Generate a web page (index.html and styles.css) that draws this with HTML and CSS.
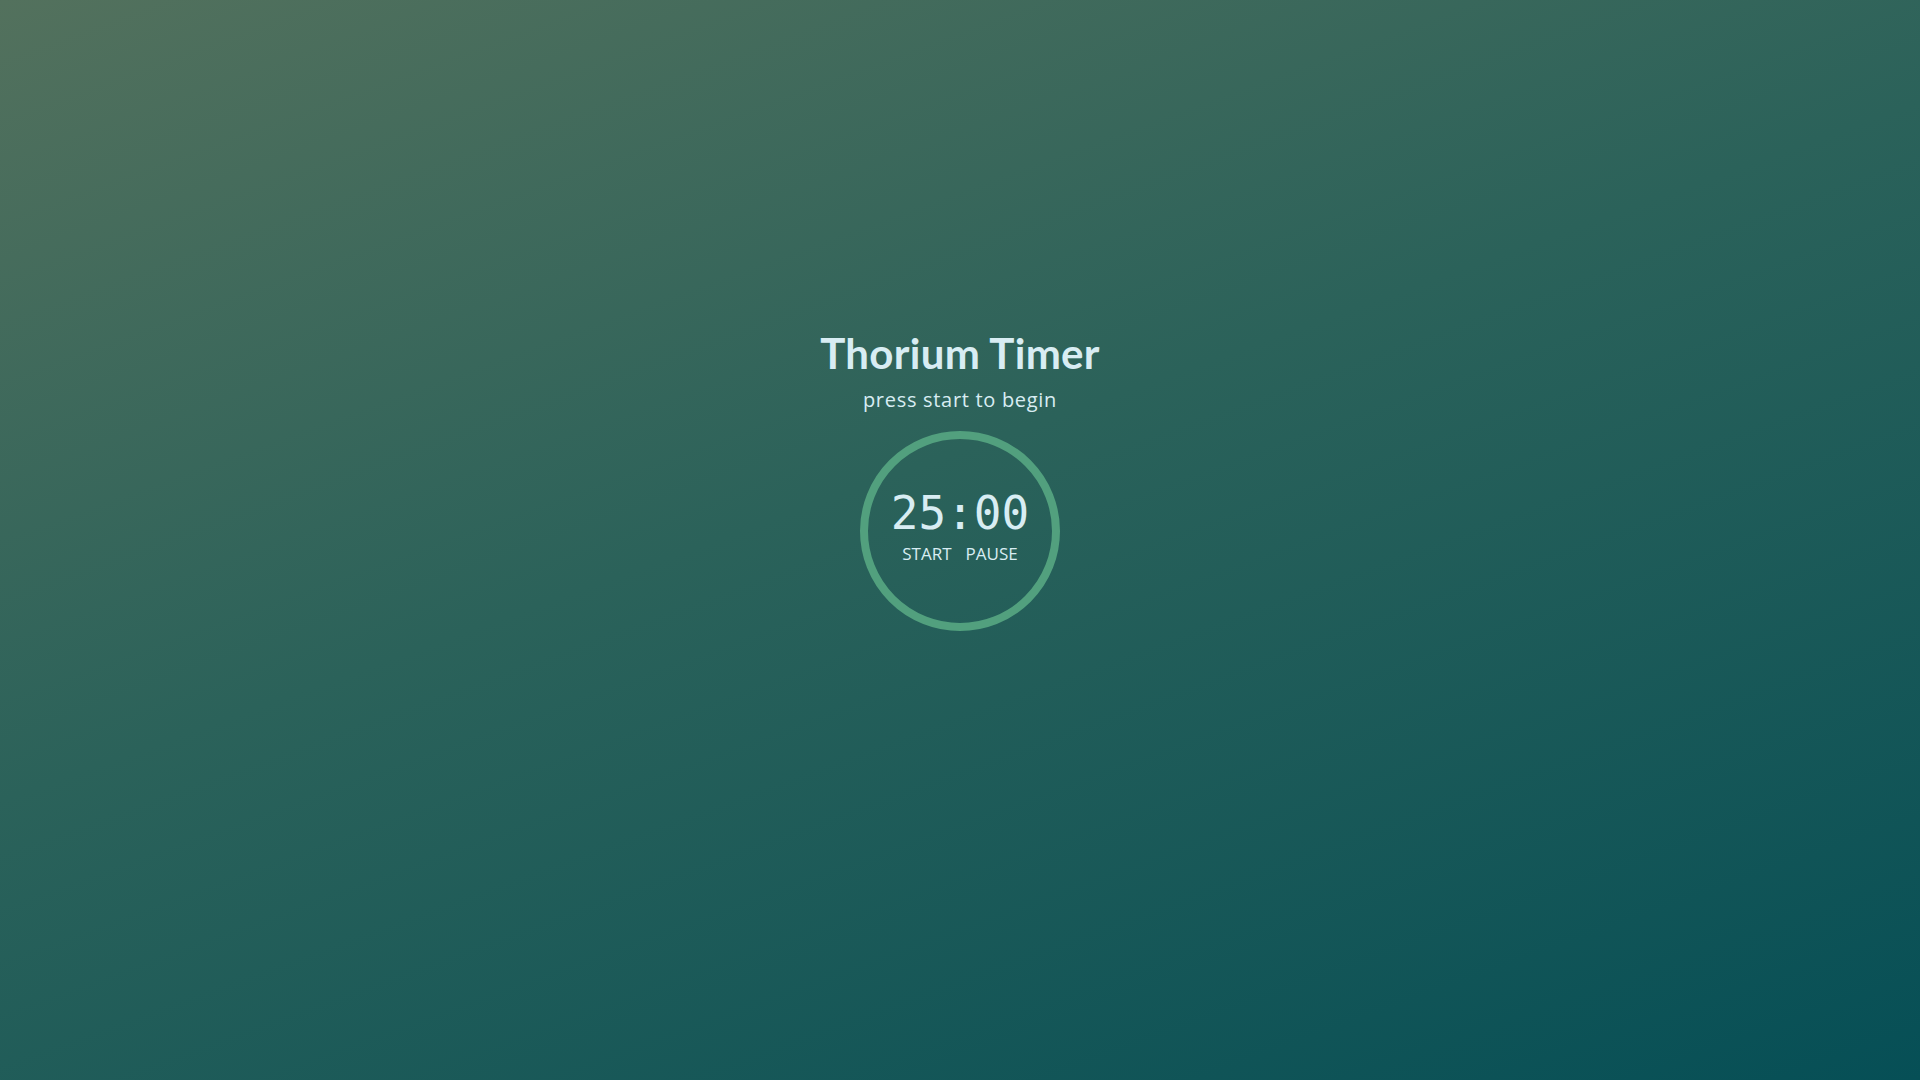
FILE: index.html
```
<!DOCTYPE html>
<html>
<head>
<meta charset="utf-8">
<title>Thorium Timer</title>
<link rel="stylesheet" href="styles.css">
</head>
<body>
<main class="app">
  <h1 class="title">Thorium Timer</h1>
  <p class="status">press start to begin</p>
  <div class="dial">
    <div class="time">25:00</div>
    <div class="controls">
      <button class="btn">START</button>
      <button class="btn">PAUSE</button>
    </div>
  </div>
</main>
</body>
</html>
```
FILE: styles.css
```
html, body {
  margin: 0;
  height: 100%;
}
body {
  background: linear-gradient(160deg, #53715d 0%, #2b625a 45%, #064f56 100%);
  font-family: "Open Sans", "Noto Sans", sans-serif;
  color: #d8edf3;
}
.app {
  display: flex;
  flex-direction: column;
  align-items: center;
  padding-top: 328px;
}
.title {
  margin: 0;
  font-family: "Lato", "Open Sans", sans-serif;
  font-size: 42px;
  line-height: 50px;
  font-weight: 700;
  letter-spacing: 0.3px;
}
.status {
  margin: 9px 0 0;
  font-size: 20px;
  line-height: 26px;
  letter-spacing: 0.7px;
}
.dial {
  margin-top: 18px;
  width: 184px;
  height: 184px;
  border: 8px solid #52a07e;
  border-radius: 50%;
  display: flex;
  flex-direction: column;
  align-items: center;
  justify-content: center;
}
.time {
  font-family: "DejaVu Sans Mono", monospace;
  font-size: 46px;
  line-height: 50px;
  margin-top: -10px;
}
.controls {
  display: flex;
  gap: 14px;
  margin-top: 5px;
}
.btn {
  background: none;
  border: 0;
  padding: 0;
  color: #d8edf3;
  font-family: "Open Sans", "Noto Sans", sans-serif;
  font-size: 17px;
  line-height: 22px;
  cursor: pointer;
}
```
